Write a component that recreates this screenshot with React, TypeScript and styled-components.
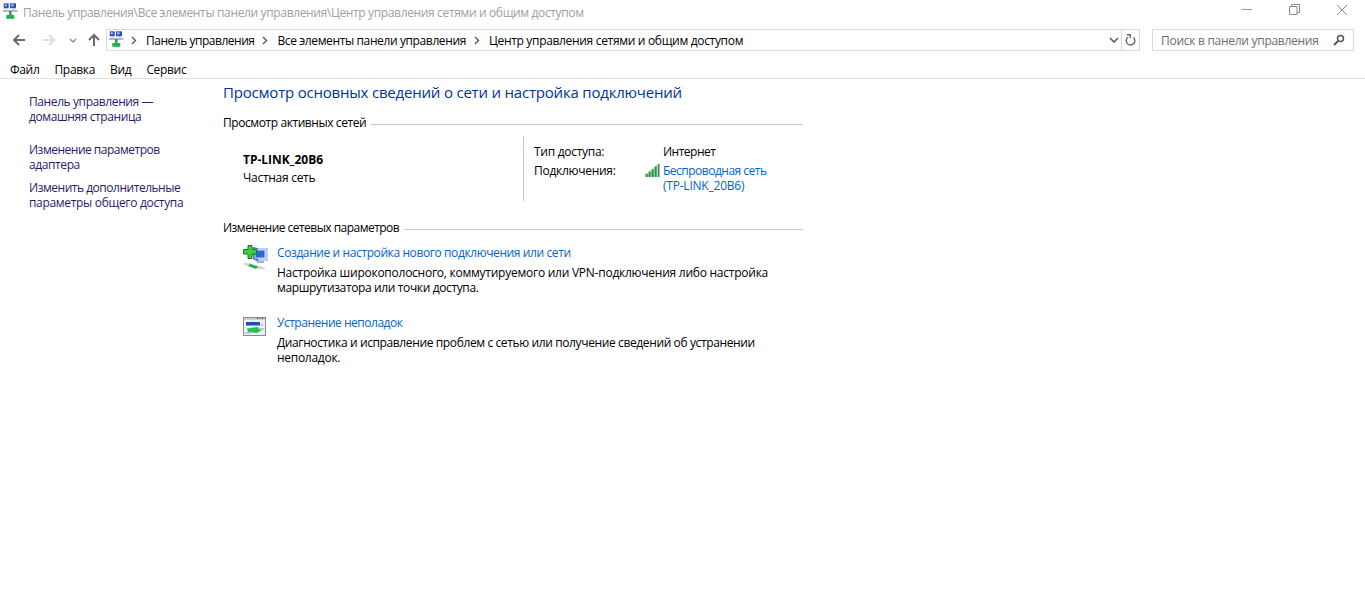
import React from "react";
import styled, { createGlobalStyle } from "styled-components";

const Global = createGlobalStyle`
  html, body { margin: 0; padding: 0; background: #fff; }
  body { font-family: "Open Sans", "Noto Sans", sans-serif; font-size: 12px; color: #000; overflow: hidden; }
  * { box-sizing: border-box; }
`;

const Window = styled.div`width: 1365px; height: 601px; display: flex; flex-direction: column; background: #fff;`;
const TitleBar = styled.div`height: 25px; display: flex; align-items: center; padding-left: 3px; flex: none;`;
const TitleIconSlot = styled.div`align-self: flex-start; margin-top: 3px; flex: none;`;
const TitleText = styled.div`margin-left: 4px; color: #a0a0a0; letter-spacing: -0.355px; flex: 1; line-height: 16px;`;
const WinBtns = styled.div`display: flex; width: 139px; height: 25px; align-items: flex-start; padding: 4px 17px 0 16px; justify-content: space-between;`;
const NavBar = styled.div`height: 30px; display: flex; align-items: center; flex: none;`;
const NavButtons = styled.div`width: 106px; display: flex; align-items: center; padding-left: 12px; flex: none; height: 24px;`;
const ArrowSvg = styled.svg<{ $rot: number; $left: number }>`width: 14px; height: 14px; flex: none; margin-left: ${p => p.$left}px; transform: rotate(${p => p.$rot}deg);`;
const HistoryDrop = styled.svg`width: 8px; height: 5px; margin-left: 13px; flex: none;`;
const AddressBox = styled.div`width: 1034px; height: 22px; border: 1px solid #d9d9d9; display: flex; align-items: center; padding-left: 2px; flex: none;`;
const AddressIconSlot = styled.div`margin-bottom: 2px; flex: none;`;
const Crumb = styled.span<{ $spacing: number }>`letter-spacing: ${p => p.$spacing}px; white-space: nowrap; color: #000;`;
const Chev = styled.svg<{ $first?: boolean }>`width: 6px; height: 9px; margin: 0 9px 0 ${p => (p.$first ? 6 : 8)}px; flex: none;`;
const AddressEnd = styled.div`margin-left: auto; display: flex; height: 100%; align-items: center;`;
const DropZone = styled.div`width: 16px; height: 100%; display: flex; align-items: center; justify-content: center; border-right: 1px solid #d9d9d9;`;
const RefreshZone = styled.div`width: 17px; display: flex; align-items: center; justify-content: center;`;
const SearchBox = styled.div`margin-left: 12px; width: 202px; height: 22px; border: 1px solid #d9d9d9; display: flex; align-items: center; justify-content: space-between; padding: 0 8px; color: #6d6d6d; letter-spacing: -0.28px; flex: none;`;
const MenuBar = styled.div`height: 24px; flex: none; display: flex; align-items: center; border-bottom: 1px solid #e2e2e2; padding: 7px 0 0 10px; gap: 15px;`;
const MenuItem = styled.span`letter-spacing: -0.32px; color: #000; line-height: 16px;`;
const Body = styled.div`flex: 1; display: flex; min-height: 0;`;
const Sidebar = styled.div`width: 223px; flex: none; padding: 15px 0 0 29px; display: flex; flex-direction: column;`;
const SideLink = styled.div<{ $gap?: number; $spacing?: number }>`color: #2b1a6b; line-height: 15px; letter-spacing: ${p => p.$spacing ?? -0.4}px; margin-top: ${p => p.$gap ?? 0}px; white-space: nowrap;`;
const Main = styled.div`width: 580px; flex: none; display: flex; flex-direction: column; padding-top: 3px;`;
const Heading = styled.div`font-size: 15px; line-height: 20px; color: #003399; letter-spacing: -0.2px; white-space: nowrap;`;
const SectionHead = styled.div<{ $top: number; $spacing: number }>`display: flex; align-items: center; margin-top: ${p => p.$top}px; line-height: 16px; letter-spacing: ${p => p.$spacing}px; white-space: nowrap; &::after { content: ""; flex: 1; height: 1px; background: #c8c8c8; margin: 2px 0 0 5px; }`;
const NetworkRow = styled.div`display: flex; margin-top: 5px; height: 65px;`;
const NetLeft = styled.div`width: 301px; padding: 16px 0 0 20px; border-right: 1px solid #c8c8c8; flex: none;`;
const NetName = styled.div`font-weight: 700; letter-spacing: -0.03px; line-height: 16px;`;
const NetKind = styled.div`letter-spacing: -0.28px; line-height: 16px; margin-top: 2px;`;
const NetRight = styled.div`flex: 1; padding: 8px 0 0 10px; display: grid; grid-template-columns: 129px 1fr; grid-auto-rows: min-content; row-gap: 4px; line-height: 15px; letter-spacing: -0.28px;`;
const AccessValue = styled.div`letter-spacing: -0.5px;`;
const ConnValue = styled.div`position: relative; color: #0066cc;`;
const ConnLine = styled.div<{ $spacing: number }>`letter-spacing: ${p => p.$spacing}px; white-space: nowrap;`;
const SignalIcon = styled.svg`position: absolute; left: -18px; top: 1px; width: 15px; height: 13px;`;
const ActionRow = styled.div<{ $top: number }>`display: flex; margin-top: ${p => p.$top}px; padding-left: 19px;`;
const ActionIcon = styled.div<{ $top: number }>`width: 35px; flex: none; height: 28px; padding: ${p => p.$top}px 0 0 1px;`;
const ActionText = styled.div`flex: 1; line-height: 15px;`;
const ActionLink = styled.div<{ $spacing: number }>`color: #0066cc; margin-bottom: 5px; line-height: 15px; letter-spacing: ${p => p.$spacing}px;`;
const DescLine = styled.div<{ $spacing: number }>`letter-spacing: ${p => p.$spacing}px; white-space: nowrap;`;
const Glyph = styled.svg`flex: none; display: block;`;

const CpIcon = () => (
  <Glyph width="16" height="16" viewBox="0 0 16 16">
    <rect x="0.7" y="0.3" width="5" height="5" fill="#2f4fc0" />
    <rect x="7" y="0.3" width="6" height="5" fill="#2f4fc0" />
    <rect x="1.7" y="1.3" width="2" height="2" fill="#a9c6f2" />
    <rect x="8" y="1.3" width="2.5" height="2" fill="#a9c6f2" />
    <rect x="0" y="7" width="14.5" height="2" fill="#aeb9c6" />
    <rect x="2.5" y="5" width="1.5" height="2" fill="#c0c8d4" />
    <rect x="10" y="5" width="1.5" height="2" fill="#c0c8d4" />
    <rect x="6" y="8" width="2.6" height="4" fill="#2fa84a" />
    <rect x="3.3" y="12" width="8" height="3.8" fill="#22b14c" />
  </Glyph>
);

const Arrow = ({ dir, color, left }: { dir: "left" | "right" | "up"; color: string; left: number }) => (
  <ArrowSvg viewBox="0 0 14 14" $left={left} $rot={dir === "left" ? 0 : dir === "right" ? 180 : 90}>
    <path d="M13 7H2M7 2L2 7l5 5" fill="none" stroke={color} strokeWidth="2" />
  </ArrowSvg>
);

const ChevIcon = ({ first }: { first?: boolean }) => (
  <Chev viewBox="0 0 6 9" $first={first}><path d="M1 1l3.5 3.5L1 8" fill="none" stroke="#555" strokeWidth="1.4" /></Chev>
);

const Crumbs = [
  { text: "Панель управления", spacing: -0.48 },
  { text: "Все элементы панели управления", spacing: -0.38 },
  { text: "Центр управления сетями и общим доступом", spacing: -0.32 },
];

export default function App() {
  return (
    <Window>
      <Global />
      <TitleBar>
        <TitleIconSlot><CpIcon /></TitleIconSlot>
        <TitleText>Панель управления\Все элементы панели управления\Центр управления сетями и общим доступом</TitleText>
        <WinBtns>
          <svg width="11" height="11" viewBox="0 0 11 11"><path d="M0 5.5h10" stroke="#9a9a9a" /></svg>
          <svg width="11" height="11" viewBox="0 0 11 11"><path d="M.5 2.5h7.5v8H.5zM2.5 2.5v-2h8v8H8" fill="none" stroke="#8a8a8a" /></svg>
          <svg width="12" height="12" viewBox="0 0 12 12"><path d="M1 1l10 10M11 1L1 11" stroke="#8a8a8a" /></svg>
        </WinBtns>
      </TitleBar>
      <NavBar>
        <NavButtons>
          <Arrow dir="left" color="#6b6b6b" left={0} />
          <Arrow dir="right" color="#dcdcdc" left={16} />
          <HistoryDrop viewBox="0 0 8 5"><path d="M1 1l3 3 3-3" fill="none" stroke="#8a8a8a" strokeWidth="1.3" /></HistoryDrop>
          <Arrow dir="up" color="#6b6b6b" left={10} />
        </NavButtons>
        <AddressBox>
          <AddressIconSlot><CpIcon /></AddressIconSlot>
          <ChevIcon first />
          {Crumbs.map((c, i) => (
            <React.Fragment key={c.text}>
              {i > 0 && <ChevIcon />}
              <Crumb $spacing={c.spacing}>{c.text}</Crumb>
            </React.Fragment>
          ))}
          <AddressEnd>
            <DropZone>
              <svg width="10" height="6" viewBox="0 0 10 6"><path d="M1 1l4 4 4-4" fill="none" stroke="#555" strokeWidth="1.5" /></svg>
            </DropZone>
            <RefreshZone>
              <svg width="11" height="13" viewBox="0 0 11 13"><path d="M8.5 3.6A4.3 4.3 0 1 1 3 3.2" fill="none" stroke="#666" strokeWidth="1.4" /><path d="M1.8.8h3.4v3.4" fill="none" stroke="#666" strokeWidth="1.4" /></svg>
            </RefreshZone>
          </AddressEnd>
        </AddressBox>
        <SearchBox>
          <span>Поиск в панели управления</span>
          <svg width="12" height="12" viewBox="0 0 12 12"><circle cx="7.5" cy="4.5" r="3" fill="none" stroke="#555" strokeWidth="1.5" /><path d="M5 7l-4 4" stroke="#555" strokeWidth="2" /></svg>
        </SearchBox>
      </NavBar>
      <MenuBar>
        <MenuItem>Файл</MenuItem>
        <MenuItem>Правка</MenuItem>
        <MenuItem>Вид</MenuItem>
        <MenuItem>Сервис</MenuItem>
      </MenuBar>
      <Body>
        <Sidebar>
          <SideLink>Панель управления —</SideLink>
          <SideLink>домашняя страница</SideLink>
          <SideLink $gap={18} $spacing={-0.5}>Изменение параметров</SideLink>
          <SideLink>адаптера</SideLink>
          <SideLink $gap={8} $spacing={-0.48}>Изменить дополнительные</SideLink>
          <SideLink $spacing={-0.32}>параметры общего доступа</SideLink>
        </Sidebar>
        <Main>
          <Heading>Просмотр основных сведений о сети и настройка подключений</Heading>
          <SectionHead $top={13} $spacing={-0.42}>Просмотр активных сетей</SectionHead>
          <NetworkRow>
            <NetLeft>
              <NetName>TP-LINK_20B6</NetName>
              <NetKind>Частная сеть</NetKind>
            </NetLeft>
            <NetRight>
              <div>Тип доступа:</div>
              <AccessValue>Интернет</AccessValue>
              <div>Подключения:</div>
              <ConnValue>
                <SignalIcon viewBox="0 0 15 13">
                  <path d="M0 10l3-1v4H0zM3 8l3-2v7H3zM6 6l3-2v9H6zM9 3l3-2v12H9z" fill="#8fc79a" />
                  <path d="M1 10h1.5v3H1zM4 8h1.5v5H4zM7 5.5h1.5V13H7zM10 3h1.5v10H10zM13 0h1.5v13H13z" fill="#2f8f46" />
                  <path d="M12 1l1-1v13h-1z" fill="#b8dcbf" />
                </SignalIcon>
                <ConnLine $spacing={-0.5}>Беспроводная сеть</ConnLine>
                <ConnLine $spacing={-0.22}>(TP-LINK_20B6)</ConnLine>
              </ConnValue>
            </NetRight>
          </NetworkRow>
          <SectionHead $top={19} $spacing={-0.53}>Изменение сетевых параметров</SectionHead>
          <ActionRow $top={9}>
            <ActionIcon $top={0}>
              <Glyph width="26" height="25" viewBox="0 0 26 25">
                <rect x="15" y="3" width="10" height="13" fill="#b9cdef" />
                <path d="M15 3l-5-1v12l5 3z" fill="#4a76d4" />
                <path d="M12 5h10v8H12z" fill="#2a66d8" stroke="#cfdcf2" strokeWidth="1" />
                <path d="M14 16h7v2h-7z" fill="#a8b0bb" />
                <path d="M1 18l5 0 14 4 3 2-7 0L1 20z" fill="#cfd4da" />
                <path d="M7 19l8 2.5-2 2.5-8-3z" fill="#22b14c" />
                <path d="M5 .5h4v4h4.5v4.5H9v4.5H5V9H.5V4.5H5z" fill="#3fcf3f" stroke="#157a24" />
              </Glyph>
            </ActionIcon>
            <ActionText>
              <ActionLink $spacing={-0.4}>Создание и настройка нового подключения или сети</ActionLink>
              <DescLine $spacing={-0.25}>Настройка широкополосного, коммутируемого или VPN-подключения либо настройка</DescLine>
              <DescLine $spacing={-0.37}>маршрутизатора или точки доступа.</DescLine>
            </ActionText>
          </ActionRow>
          <ActionRow $top={20}>
            <ActionIcon $top={2}>
              <Glyph width="24" height="21" viewBox="0 0 24 21">
                <rect x=".5" y=".5" width="22" height="18" fill="#eef1f5" stroke="#8a8a8a" />
                <rect x="1" y="1" width="21" height="2" fill="#c9ced6" />
                <path d="M14 1.5h1M16.5 1.5h1M19 1.5h1" stroke="#4a4a4a" />
                <path d="M3 5h14v3.5H3z" fill="#1e4fb8" />
                <path d="M3 8.5h14l3-2v2z" fill="#8fb0e8" />
                <path d="M4 11.5l10-1.5 6 2.5-6 3.5-9-1z" fill="#22c05a" />
                <path d="M2 15h4l2 2H2zM15 11h6v2h-4z" fill="#c0c6ce" />
              </Glyph>
            </ActionIcon>
            <ActionText>
              <ActionLink $spacing={-0.48}>Устранение неполадок</ActionLink>
              <DescLine $spacing={-0.38}>Диагностика и исправление проблем с сетью или получение сведений об устранении</DescLine>
              <DescLine $spacing={-0.28}>неполадок.</DescLine>
            </ActionText>
          </ActionRow>
        </Main>
      </Body>
    </Window>
  );
}
